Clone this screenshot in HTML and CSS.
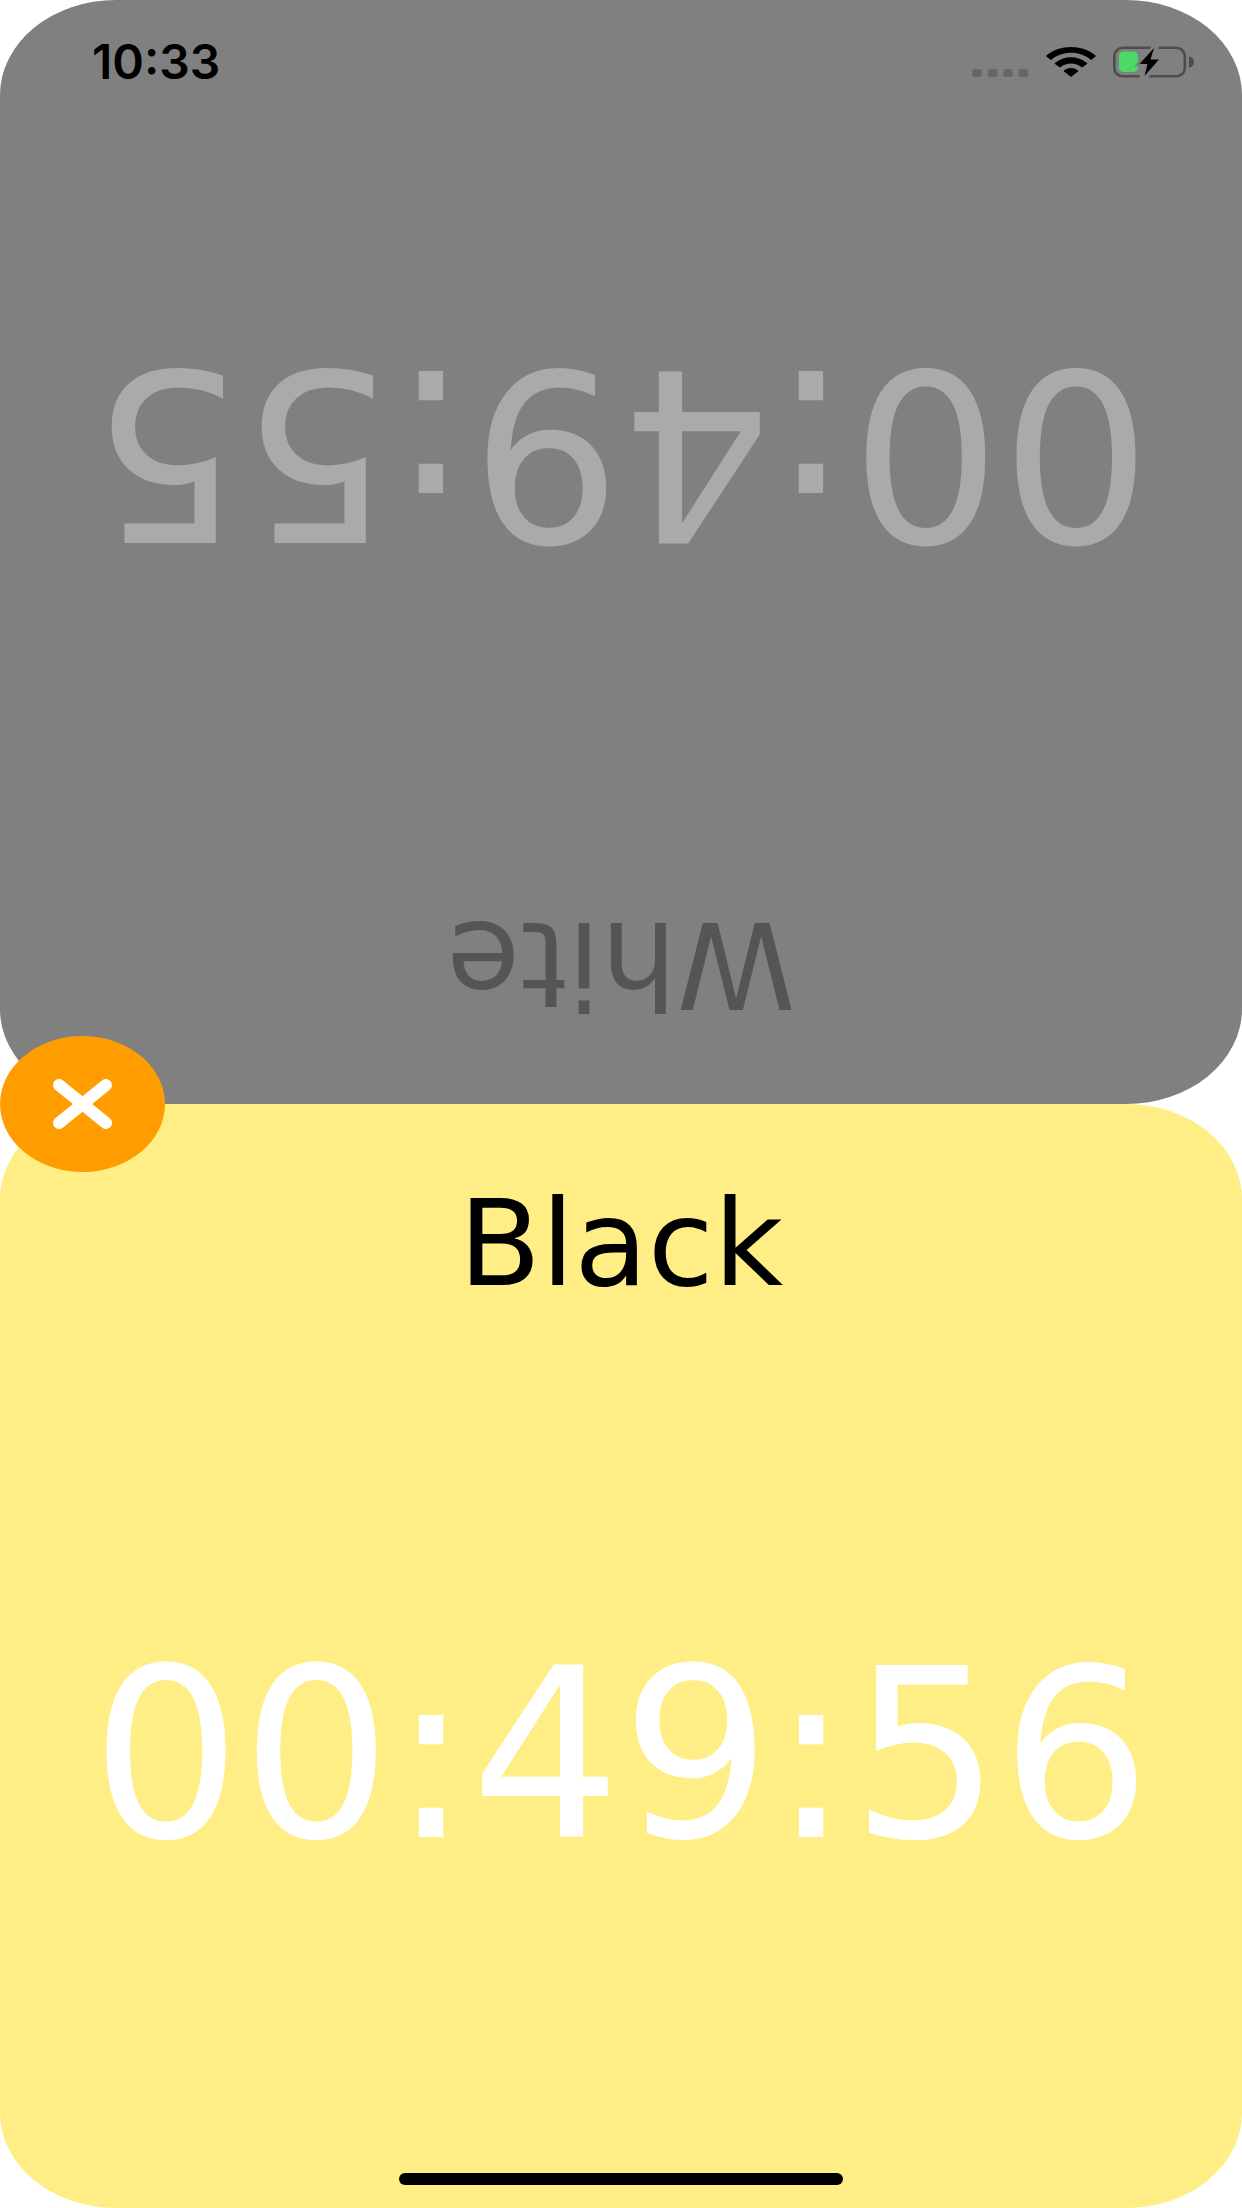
FILE: index.html
```html
<!DOCTYPE html>
<html lang="en">
<head>
  <meta charset="utf-8">
  <meta name="viewport" content="width=device-width, initial-scale=1">
  <title>Chess Clock</title>
  <link rel="stylesheet" href="styles.css">
</head>
<body>
  <main class="clock">
    <header class="status-bar">
      <time class="status-time">10:33</time>
      <div class="status-icons">
        <svg class="icon-signal" viewBox="0 0 57 30" aria-hidden="true">
          <g fill="#676767">
            <rect x="0" y="22" width="10" height="8" rx="3"/>
            <rect x="15.5" y="22" width="10" height="8" rx="3"/>
            <rect x="31" y="22" width="10" height="8" rx="3"/>
            <rect x="46.5" y="22" width="10" height="8" rx="3"/>
          </g>
        </svg>
        <svg class="icon-wifi" viewBox="0 0 50 30" aria-hidden="true">
          <path d="M0.5 8.5C14-2.8 36-2.8 49.5 8.5Q50 9 49.5 9.5L45.5 12.7Q45 13 44.5 12.6C33.5 3.5 16.5 3.5 5.5 12.6Q5 13 4.5 12.7L.5 9.5Q0 9 .5 8.5Z"/>
          <path d="M9 16C18 8.3 32 8.3 41 16Q41.5 16.5 41 17L36.5 20.2Q36 20.5 35.5 20.2C29.5 15.3 20.5 15.3 14.5 20.2Q14 20.5 13.5 20.2L9 17Q8.5 16.5 9 16Z"/>
          <path d="M18 23.5C22 20.2 28 20.2 32 23.5Q32.5 24 32 24.5L25.6 29.6Q25 30 24.4 29.6L18 24.5Q17.5 24 18 23.5Z"/>
        </svg>
        <svg class="icon-battery" viewBox="0 0 82 32" aria-hidden="true">
          <rect x="1.3" y="1.8" width="70.500" height="28.500" rx="8.500" fill="none" stroke="#4c4c4c" stroke-width="2.600"/>
          <path d="M76 10Q81 12 81 16T76 22Z" fill="#4c4c4c"/>
          <rect x="6" y="5.500" width="19" height="20.500" rx="4.500" fill="#4cd964"/>
          <path d="M39 0L21 20.500H30L26 32H35L49 13H42L46 0Z" fill="#808080"/>
          <path d="M41 2L26.500 18H34.500L31.500 30L46 13.500H37.500Z" fill="#000"/>
        </svg>
      </div>
    </header>

    <section class="player player-white">
      <h2 class="player-name">White</h2>
      <p class="player-time">00:49:55</p>
    </section>

    <section class="player player-black">
      <h2 class="player-name">Black</h2>
      <p class="player-time">00:49:56</p>
    </section>

    <button class="close-button" type="button" aria-label="Close">
      <svg class="icon-close" viewBox="0 0 60 48" aria-hidden="true">
        <path d="M6 5L53 43M53 5L6 43" fill="none" stroke="#fff" stroke-width="12" stroke-linecap="round"/>
      </svg>
    </button>
    <div class="home-indicator"></div>
  </main>
</body>
</html>
```

FILE: styles.css
```css
* {
  box-sizing: border-box;
}

body {
  margin: 0;
  background: #fff;
  font-family: "DejaVu Sans", Verdana, sans-serif;
}

.clock {
  position: relative;
  display: grid;
  grid-template-rows: 1fr 1fr;
  min-height: 100vh;
}

/* Status bar lies over the first player's panel */
.status-bar {
  position: absolute;
  inset: 0 0 auto;
  z-index: 1;
  display: flex;
  align-items: center;
  justify-content: space-between;
  padding: 38px 47px 0 92px;
}

.status-time {
  font-family: Inter, sans-serif;
  font-size: 48px;
  font-weight: 600;
  line-height: 48px;
  color: #000;
}

.status-icons {
  display: flex;
  align-items: center;
  gap: 17px;
}

.icon-signal {
  width: 57px;
  height: 30px;
}

.icon-wifi {
  width: 50px;
  height: 30px;
}

.icon-battery {
  width: 82px;
  height: 32px;
}

/* Player panels */
.player {
  display: flex;
  flex-direction: column;
  align-items: center;
  padding-top: 80px;
  border-radius: 116px / 95px;
}

.player-white {
  background: #808080;
  color: #555;
  transform: rotate(180deg);
}

.player-black {
  background: #ffee85;
  color: #000;
}

.player-name {
  margin: 0;
  font-size: 120px;
  font-weight: 400;
  line-height: 120px;
}

.player-time {
  display: flex;
  flex: 1;
  align-items: center;
  margin: 0;
  font-size: 236px;
  line-height: 236px;
  color: #fff;
}

.player-white .player-time {
  color: #aaa;
}

/* Close button sits over the seam between the panels */
.close-button {
  position: absolute;
  top: 50%;
  left: 0;
  display: flex;
  align-items: center;
  justify-content: center;
  width: 165px;
  height: 136px;
  padding: 0;
  border: 0;
  border-radius: 50%;
  background: #ff9d00;
  transform: translateY(-50%);
  cursor: pointer;
}

.icon-close {
  width: 60px;
  height: 48px;
  overflow: visible;
}

.home-indicator {
  position: absolute;
  bottom: 23px;
  left: 50%;
  width: 444px;
  height: 12px;
  border-radius: 6px;
  background: #000;
  transform: translateX(-50%);
}
```
